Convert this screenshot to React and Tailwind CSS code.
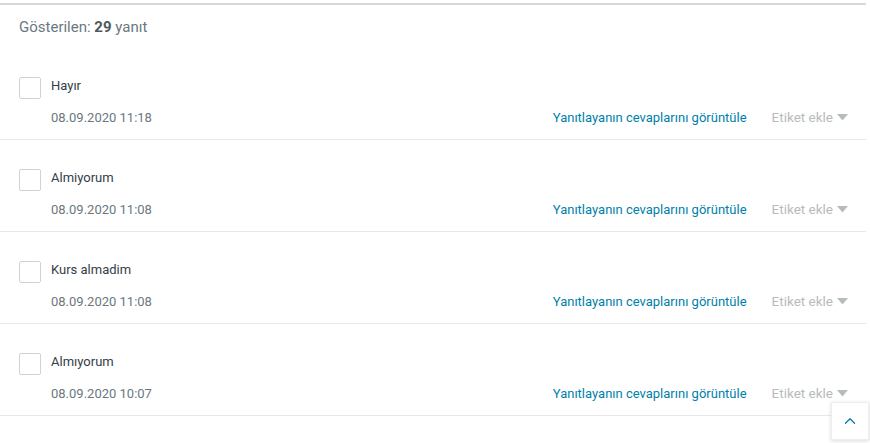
import { ChevronUp } from 'lucide-react'

const rows = [
  { label: 'Hayır', date: '08.09.2020 11:18' },
  { label: 'Almiyorum', date: '08.09.2020 11:08' },
  { label: 'Kurs almadim', date: '08.09.2020 11:08' },
  { label: 'Almıyorum', date: '08.09.2020 10:07' },
]

const ResponseRow = ({ row }) => (
  <div className="border-b border-[#e8e8e8] pt-[29px] pb-[13px]">
    <div className="flex items-start">
      <button
        type="button"
        className="w-[22px] h-[22px] ml-[19px] shrink-0 rounded-[2px] border border-[#d0d2d3] bg-white"
      />
      <div className="flex-1 ml-[10px]">
        <div className="text-[13px] leading-[17px] text-[#333e48]">{row.label}</div>
      </div>
    </div>
    <div className="flex items-center mt-[10px] pr-[18px]">
      <span className="ml-[51px] text-[13px] leading-[17px] text-[#6b787f]">{row.date}</span>
      <a className="ml-auto text-[13px] leading-[17px] text-[#007faa]">
        Yanıtlayanın cevaplarını görüntüle
      </a>
      <span className="ml-[25px] flex items-center gap-[4px] text-[13.5px] leading-[17px] text-[#b7bbbd]">
        Etiket ekle
        <svg width="11" height="7" viewBox="0 0 11 7">
          <path d="M0 0h11L5.5 6.5z" fill="#b7bbbd" />
        </svg>
      </span>
    </div>
  </div>
)

export default function App() {
  return (
    <div
      className="relative w-[870px] h-[443px] overflow-hidden bg-white"
      style={{ fontFamily: 'Roboto, "Open Sans", sans-serif' }}
    >
      <div className="mt-[3px] mr-[4px] border-t-2 border-[#d9d9d9]" />
      <div className="mr-[4px]">
        <div className="px-[19px] pt-[13px] pb-[12px] text-[15px] leading-[18px] text-[#6b787f]">
          Gösterilen: <span className="font-bold text-[#4d5960]">29</span> yanıt
        </div>
        {rows.map((row, i) => (
          <ResponseRow key={i} row={row} />
        ))}
      </div>
      <button
        type="button"
        className="absolute left-[831px] top-[402px] w-[38px] h-[38px] flex items-center justify-center bg-white border border-[#eeeeee] shadow-[0_1px_4px_rgba(0,0,0,0.15)]"
      >
        <ChevronUp size={18} strokeWidth={1.75} color="#007faa" />
      </button>
    </div>
  )
}
